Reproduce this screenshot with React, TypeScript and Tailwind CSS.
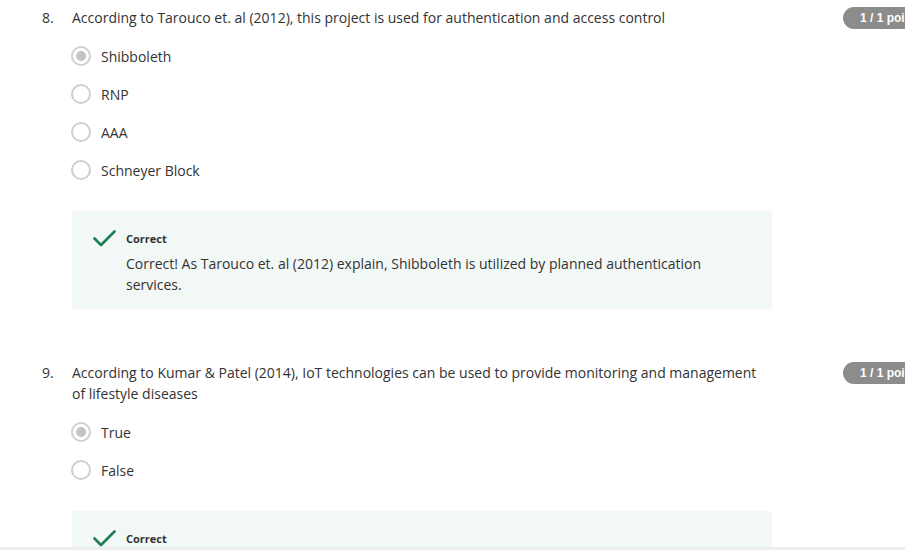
import React from "react"

type Question = {
  num: string
  text: string
  options: string[]
  selected: number
  feedback: string
}

const questions: Question[] = [
  {
    num: "8.",
    text: "According to Tarouco et. al (2012), this project is used for authentication and access control",
    options: ["Shibboleth", "RNP", "AAA", "Schneyer Block"],
    selected: 0,
    feedback:
      "Correct! As Tarouco et. al (2012) explain, Shibboleth is utilized by planned authentication services.",
  },
  {
    num: "9.",
    text: "According to Kumar & Patel (2014), IoT technologies can be used to provide monitoring and management of lifestyle diseases",
    options: ["True", "False"],
    selected: 0,
    feedback: "Correct! Kumar & Patel (2014) note that IoT can monitor and manage lifestyle diseases.",
  },
]

function Radio({ checked }: { checked: boolean }) {
  return (
    <span className="w-[20px] h-[20px] rounded-full border-2 border-[#cfcfcf] bg-white flex items-center justify-center shrink-0">
      {checked && <span className="w-[10px] h-[10px] rounded-full bg-[#c4c4c4]" />}
    </span>
  )
}

function Check() {
  return (
    <svg width="23" height="17" viewBox="0 0 23 17" className="shrink-0">
      <polyline
        points="1.5,8.5 8,15 21.5,1.5"
        fill="none"
        stroke="#1f7d52"
        strokeWidth="2.6"
        strokeLinecap="round"
        strokeLinejoin="round"
      />
    </svg>
  )
}

function QuestionBlock({
  q,
  className,
  optionsClass = "mt-[8px]",
}: {
  q: Question
  className?: string
  optionsClass?: string
}) {
  return (
    <div className={className}>
      {/* Question row */}
      <div className="flex items-start">
        <span className="w-[30px] ml-[42px] leading-[21px] shrink-0">{q.num}</span>
        <p className="w-[700px] leading-[21px] shrink-0">{q.text}</p>
        <span
          className="ml-[71px] h-[22px] shrink-0 rounded-full bg-[#8c8c8c] text-white font-bold text-[12px] leading-[22px] pl-[17px] pr-[12px] whitespace-nowrap"
          style={{ fontFamily: '"Liberation Sans", Arial, sans-serif' }}
        >
          1 / 1 point
        </span>
      </div>

      {/* Options */}
      <div className={`${optionsClass} ml-[71px]`}>
        {q.options.map((opt, i) => (
          <div key={opt} className="h-[38px] flex items-center gap-[10px]">
            <Radio checked={i === q.selected} />
            <span className="leading-[21px]">{opt}</span>
          </div>
        ))}
      </div>

      {/* Feedback */}
      <div className="mt-[22px] ml-[72px] w-[700px] bg-[#f2f8f6] pt-[19px] pb-[14px] pl-[21px] pr-[60px]">
        <div className="flex items-center gap-[10px]">
          <Check />
          <span className="text-[11px] font-bold leading-[16px] text-[#333]">Correct</span>
        </div>
        <p className="ml-[33px] mt-[6px] leading-[21px]">{q.feedback}</p>
      </div>
    </div>
  )
}

export default function App() {
  return (
    <div
      className="relative w-[905px] h-[550px] overflow-hidden bg-white text-[14px] text-[#333]"
      style={{ fontFamily: '"Open Sans", sans-serif' }}
    >
      <QuestionBlock q={questions[0]} className="pt-[7px]" />
      <QuestionBlock q={questions[1]} className="pt-[53px]" optionsClass="mt-[9px]" />
      {/* footer edge */}
      <div className="absolute left-0 right-0 bottom-0 h-[3px] bg-[#eeeeee]" />
    </div>
  )
}
